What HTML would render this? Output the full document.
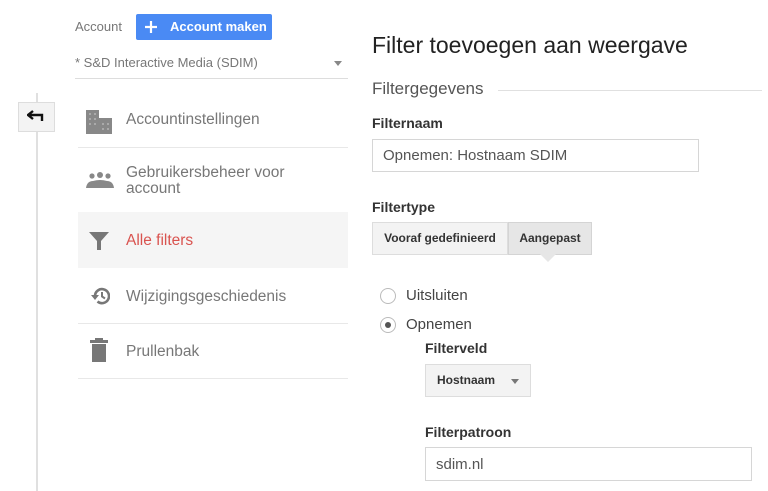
<!DOCTYPE html>
<html><head><meta charset="utf-8"><style>
*{margin:0;padding:0;box-sizing:border-box}
body{width:768px;height:491px;overflow:hidden;background:#fff;font-family:"Liberation Sans",Arial,sans-serif;position:relative;color:#555}
.a{position:absolute;white-space:nowrap}
.sep{position:absolute;left:78px;width:270px;height:1px;background:#e8e8e8}
.mt{font-size:15.5px;color:#777}
.lbl{font-size:14px;font-weight:bold;color:#333}
.inp{position:absolute;border:1px solid #d6d6d6;background:#fff;font-size:15px;color:#555;padding-left:10px;display:flex;align-items:center}
</style></head><body>
<div class="a" style="left:36px;top:93px;width:2px;height:398px;background:#e0e0e0"></div>
<div class="a" style="left:18px;top:102px;width:37px;height:30px;background:#f3f3f3;border:1px solid #ddd"></div>
<svg class="a" style="left:27px;top:110px" width="18" height="12" viewBox="0 0 18 12"><path d="M6 1 L1 5 L6 9 M1 5 H15 V11" stroke="#111" stroke-width="2.4" fill="none"/></svg>

<div class="a" style="left:75px;top:19px;font-size:13px;color:#777">Account</div>
<div class="a" style="left:136px;top:14px;width:136px;height:26px;background:#4a8af4;border-radius:2px;color:#fff;font-size:13px;font-weight:bold;line-height:26px;padding-left:34px">Account maken</div>
<svg class="a" style="left:144px;top:20px" width="14" height="14"><path d="M7 1V13M1 7H13" stroke="#fff" stroke-width="2.2"/></svg>
<div class="a" style="left:75px;top:55px;font-size:13px;color:#777">* S&amp;D Interactive Media (SDIM)</div>
<svg class="a" style="left:334px;top:61px" width="8" height="5"><path d="M0 0H8L4 5Z" fill="#888"/></svg>
<div class="a" style="left:75px;top:78px;width:273px;height:1px;background:#ddd"></div>

<svg class="a" style="left:86px;top:110px" width="26" height="24" viewBox="0 0 26 24"><rect x="0" y="0" width="13" height="24" fill="#888"/><rect x="13" y="8" width="13" height="16" fill="#888"/><g fill="#aaa"><rect x="3" y="3" width="2" height="2"/><rect x="8" y="3" width="2" height="2"/><rect x="3" y="8" width="2" height="2"/><rect x="8" y="8" width="2" height="2"/><rect x="3" y="13" width="2" height="2"/><rect x="8" y="13" width="2" height="2"/><rect x="16" y="13" width="2" height="2"/><rect x="21" y="13" width="2" height="2"/><rect x="16" y="18" width="2" height="2"/><rect x="21" y="18" width="2" height="2"/></g></svg>
<div class="a mt" style="left:126px;top:111px">Accountinstellingen</div>
<div class="sep" style="top:147px"></div>

<svg class="a" style="left:86px;top:172px" width="28" height="18" viewBox="0 0 28 18"><g fill="#888"><circle cx="6" cy="4" r="2.6"/><circle cx="14" cy="3" r="3"/><circle cx="22" cy="4" r="2.6"/><path d="M0 16 Q1 9 7 9 Q14 7 21 9 Q27 9 28 16Z"/></g></svg>
<div class="a mt" style="left:126px;top:165px;line-height:16px">Gebruikersbeheer voor<br>account</div>

<div class="a" style="left:78px;top:212px;width:270px;height:56px;background:#f5f5f5"></div>
<svg class="a" style="left:89px;top:232px" width="20" height="18" viewBox="0 0 20 18"><path d="M0 0H20L12 9V18H8V9Z" fill="#777"/></svg>
<div class="a" style="left:126px;top:232px;font-size:15.5px;color:#d9534f">Alle filters</div>

<svg class="a" style="left:90px;top:287px" width="20" height="18" viewBox="0 0 20 18"><path d="M5 9 A7 7 0 1 1 7.5 14.5" stroke="#777" stroke-width="2.6" fill="none"/><path d="M1 8H9L5 13Z" fill="#777"/><path d="M12 5V9.5L15 11.5" stroke="#777" stroke-width="2" fill="none"/></svg>
<div class="a mt" style="left:126px;top:288px">Wijzigingsgeschiedenis</div>
<div class="sep" style="top:323px"></div>

<svg class="a" style="left:90px;top:338px" width="18" height="24" viewBox="0 0 18 24"><rect x="0" y="2" width="18" height="3" fill="#777"/><rect x="5" y="0" width="8" height="3" fill="#777"/><rect x="2" y="6" width="14" height="18" fill="#777"/></svg>
<div class="a mt" style="left:126px;top:343px">Prullenbak</div>
<div class="sep" style="top:378px"></div>

<div class="a" style="left:372px;top:32px;font-size:23px;color:#222">Filter toevoegen aan weergave</div>
<div class="a" style="left:372px;top:79px;font-size:17px;color:#555">Filtergegevens</div>
<div class="a" style="left:498px;top:90px;width:264px;height:1px;background:#e0e0e0"></div>
<div class="a lbl" style="left:372px;top:115px">Filternaam</div>
<div class="inp" style="left:372px;top:139px;width:327px;height:33px">Opnemen: Hostnaam SDIM</div>
<div class="a lbl" style="left:372px;top:199px">Filtertype</div>
<div class="a" style="left:372px;top:222px;width:136px;height:33px;background:#f3f3f3;border:1px solid #ddd;font-size:12px;font-weight:bold;color:#333;line-height:31px;text-align:center">Vooraf gedefinieerd</div>
<div class="a" style="left:508px;top:222px;width:84px;height:33px;background:#e6e6e6;border:1px solid #d4d4d4;font-size:12px;font-weight:bold;color:#333;line-height:31px;text-align:center">Aangepast</div>
<svg class="a" style="left:540px;top:254px" width="16" height="9"><path d="M0 0H16L8 8Z" fill="#e6e6e6"/></svg>

<div class="a" style="left:380px;top:288px;width:16px;height:16px;border:1px solid #bbb;border-radius:50%"></div>
<div class="a" style="left:406px;top:287px;font-size:15px;color:#444">Uitsluiten</div>
<div class="a" style="left:380px;top:317px;width:16px;height:16px;border:1px solid #bbb;border-radius:50%"></div>
<div class="a" style="left:385px;top:322px;width:6px;height:6px;background:#555;border-radius:50%"></div>
<div class="a" style="left:406px;top:316px;font-size:15px;color:#444">Opnemen</div>
<div class="a lbl" style="left:425px;top:340px">Filterveld</div>
<div class="a" style="left:425px;top:364px;width:106px;height:33px;background:#f3f3f3;border:1px solid #ddd;font-size:12px;font-weight:bold;color:#333;line-height:31px;padding-left:11px">Hostnaam</div>
<svg class="a" style="left:511px;top:379px" width="8" height="5"><path d="M0 0H8L4 5Z" fill="#777"/></svg>
<div class="a lbl" style="left:425px;top:424px">Filterpatroon</div>
<div class="inp" style="left:425px;top:447px;width:327px;height:34px">sdim.nl</div>
</body></html>
